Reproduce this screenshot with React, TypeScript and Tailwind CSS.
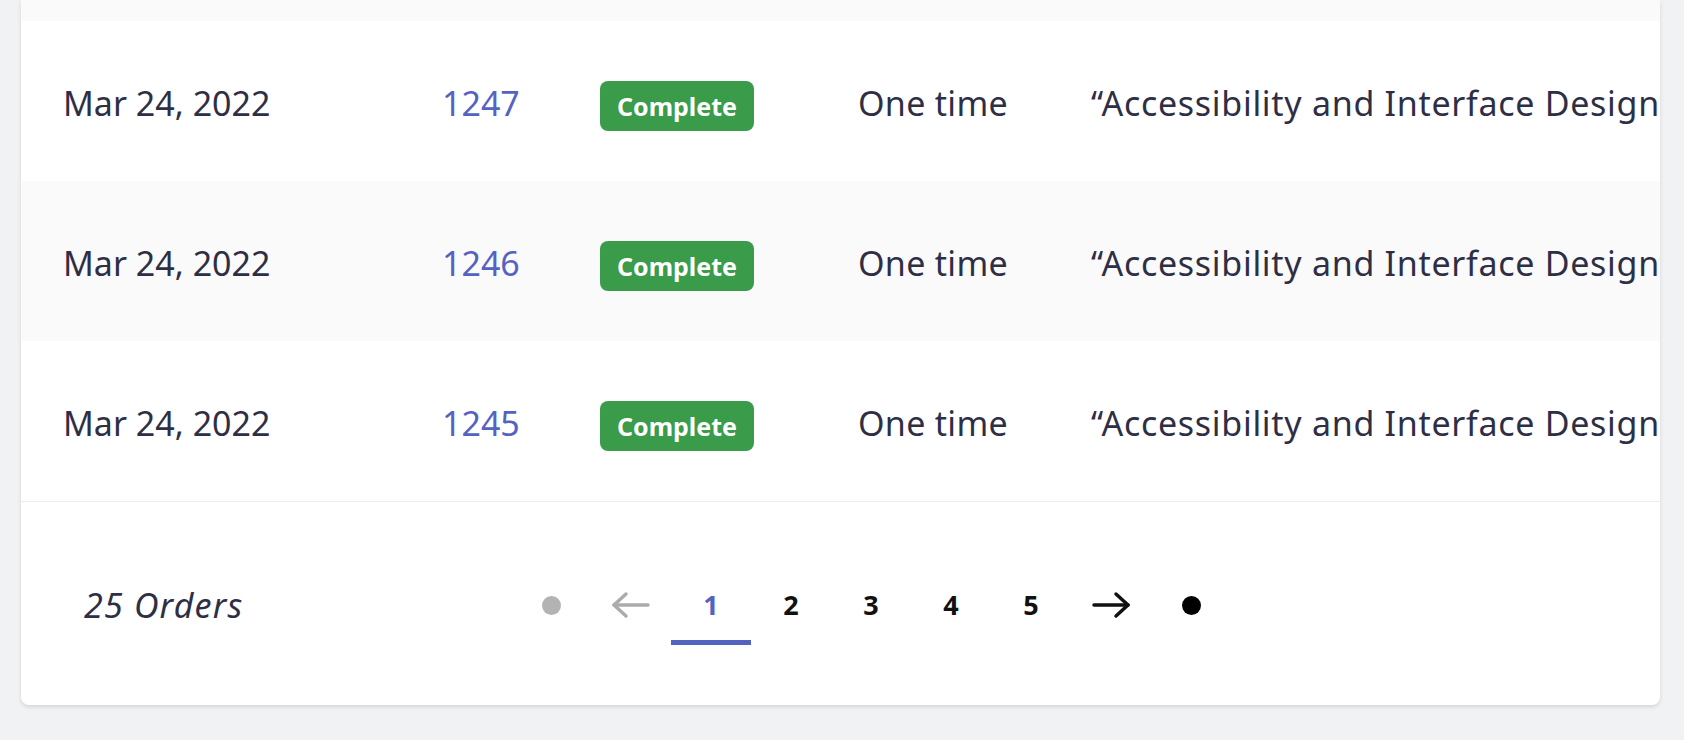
import React from 'react';

const orders = [
    { date: 'Mar 24, 2022', id: '1247', status: 'Complete', type: 'One time', item: '“Accessibility and Interface Design”' },
    { date: 'Mar 24, 2022', id: '1246', status: 'Complete', type: 'One time', item: '“Accessibility and Interface Design”' },
    { date: 'Mar 24, 2022', id: '1245', status: 'Complete', type: 'One time', item: '“Accessibility and Interface Design”' },
];

const Arrow = ({ dir, color }: { dir: 'left' | 'right'; color: string }) => (
    <svg width="40" height="28" viewBox="0 0 40 28" fill="none" stroke={color} strokeWidth="3.5" strokeLinecap="round" strokeLinejoin="round">
        {dir === 'left' ? (
            <>
                <path d="M3 14H37" />
                <path d="M15 3L3 14L15 25" />
            </>
        ) : (
            <>
                <path d="M3 14H37" />
                <path d="M25 3L37 14L25 25" />
            </>
        )}
    </svg>
);

export default function App() {
    return (
        <div className="min-h-screen bg-[#f1f2f4] pl-[21px] pr-[24px] pb-[34px] font-['Noto_Sans',sans-serif] text-[#2e2f45]">
            <div className="bg-white rounded-b-lg shadow-[0_2px_4px_rgba(0,0,0,0.12)] overflow-hidden">
                {/* tail of the previous row */}
                <div className="h-[21px] bg-[#fafafa]" />

                {orders.map((o, i) => (
                    <div
                        key={o.id}
                        className={`flex items-baseline h-[160px] pt-[58px] pl-[42px] text-[34px] leading-[48px] ${i % 2 === 1 ? 'bg-[#fafafa]' : 'bg-white'}`}
                    >
                        <div className="w-[379px] shrink-0">{o.date}</div>
                        <div className="w-[158px] shrink-0 text-[#5462c2]">{o.id}</div>
                        <div className="w-[258px] shrink-0">
                            <span className="inline-block bg-[#3a9b4a] text-white font-bold text-[25px] leading-[36px] px-[17px] py-[7px] rounded-[8px]">
                                {o.status}
                            </span>
                        </div>
                        <div className="w-[233px] shrink-0 tracking-[0.3px]">{o.type}</div>
                        <div className="whitespace-nowrap tracking-[0.7px]">{o.item}</div>
                    </div>
                ))}

                <div className="border-t border-[#ececec] flex items-center pt-[63px] pb-[60px] pl-[63px]">
                    <div className="w-[427px] shrink-0 italic text-[34px] tracking-[1.2px] leading-[48px]">25 Orders</div>
                    <div className="flex items-center font-bold text-[27px] text-[#111]">
                        <button className="w-[80px] h-[80px] flex items-center justify-center">
                            <span className="size-[19px] rounded-full bg-[#b3b3b3]" />
                        </button>
                        <button className="w-[80px] h-[80px] flex items-center justify-center">
                            <Arrow dir="left" color="#acacac" />
                        </button>
                        <button className="w-[80px] h-[80px] flex items-center justify-center text-[#5462c2] border-b-[5px] border-[#5462c2] pt-[5px]">1</button>
                        <button className="w-[80px] h-[80px] flex items-center justify-center">2</button>
                        <button className="w-[80px] h-[80px] flex items-center justify-center">3</button>
                        <button className="w-[80px] h-[80px] flex items-center justify-center">4</button>
                        <button className="w-[80px] h-[80px] flex items-center justify-center">5</button>
                        <button className="w-[80px] h-[80px] flex items-center justify-center">
                            <Arrow dir="right" color="#111111" />
                        </button>
                        <button className="w-[80px] h-[80px] flex items-center justify-center">
                            <span className="size-[19px] rounded-full bg-black" />
                        </button>
                    </div>
                </div>
            </div>
        </div>
    );
}
